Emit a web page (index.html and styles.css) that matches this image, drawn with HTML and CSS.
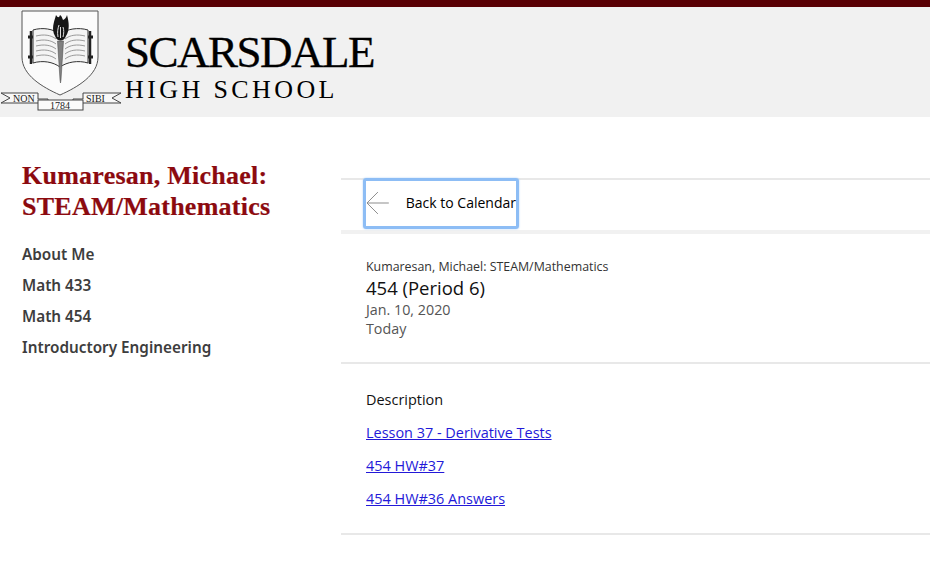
FILE: index.html
```html
<!DOCTYPE html>
<html lang="en">
<head>
    <meta charset="UTF-8">
    <meta name="viewport" content="width=device-width, initial-scale=1.0">
    <title>Scarsdale High School</title>
    <link rel="stylesheet" href="styles.css">
</head>
<body>

<header class="site-header">
    <svg class="crest" width="122" height="106" viewBox="0 0 122 106">
        <!-- shield -->
        <path d="M22 4 H98 V50 C98 68 78 80 60 88 C42 80 22 68 22 50 Z" fill="#fbfbfb" stroke="#555" stroke-width="1"/>
        <!-- book -->
        <path d="M31 24 V57 M90 24 V57" stroke="#222" stroke-width="2.500"/>
        <path d="M28 30 H33 M28 50 H33 M88 30 H93 M88 50 H93" stroke="#222" stroke-width="3"/>
        <path d="M33 23 C43 20 53 22 60 27 C67 22 78 20 88 23 V56 C78 53 67 55 60 60 C53 55 43 53 33 56 Z" fill="#f4f4f4" stroke="#333" stroke-width="1"/>
        <path d="M36 29 C44 27 51 28 56 32 M36 34 C44 32 51 33 56 37 M36 39 C44 37 51 38 56 42 M36 44 C44 42 51 43 56 47 M36 49 C44 47 51 48 56 52 M65 32 C70 28 77 27 85 29 M65 37 C70 33 77 32 85 34 M65 42 C70 38 77 37 85 39 M65 47 C70 43 77 42 85 44 M65 52 C70 48 77 47 85 49" fill="none" stroke="#999" stroke-width="1"/>
        <!-- torch -->
        <path d="M57.500 34 H63.500 L61 73 L60.500 76 L60 73 Z" fill="#808080" stroke="#444" stroke-width="0.500"/>
        <path d="M55 29 C51 22 54 15 56 8 C58 11 59 11 60 8 C62 9 62 11 63 13 C65 12 66 11 67 8 C69 15 70 23 66 29 C64 35 57 35 55 29 Z" fill="#161616"/>
        <path d="M58 30 C57 25 58 21 59 18 M60.500 31 V20 M63 30 C64 26 64 23 63 20" fill="none" stroke="#ddd" stroke-width="1"/>
        <!-- banner -->
        <path d="M1 86 H38 V92 H48 V96 H38 H1 L10 91 Z M121 86 H83 V92 H73 V96 H83 H121 L112 91 Z" fill="#f8f8f8" stroke="#444" stroke-width="1"/>
        <rect x="38" y="93" width="45" height="10" fill="#fbfbfb" stroke="#444" stroke-width="1"/>
        <text class="crest-text" x="13" y="95">NON</text>
        <text class="crest-text" x="86" y="95">SIBI</text>
        <text class="crest-text" x="50" y="102">1784</text>
    </svg>
    <div class="school-name">
        <div class="school-top">SCARSDALE</div>
        <div class="school-bottom">HIGH SCHOOL</div>
    </div>
</header>

<div class="page">
    <aside class="sidebar">
        <h2 class="dept-title">Kumaresan, Michael: STEAM/Mathematics</h2>
        <nav class="side-nav">
            <a href="#">About Me</a>
            <a href="#">Math 433</a>
            <a href="#">Math 454</a>
            <a href="#">Introductory Engineering</a>
        </nav>
    </aside>

    <main class="content">
        <div class="back-row">
            <a class="back-link" href="#">
                <svg width="26" height="24" viewBox="0 0 26 24">
                    <path d="M24 12 H2 M13 1 L2 12 L13 23" fill="none" stroke="#8c8c8c" stroke-width="1"/>
                </svg>
                <span>Back to Calendar</span>
            </a>
        </div>

        <section class="event-head">
            <div class="event-owner">Kumaresan, Michael: STEAM/Mathematics</div>
            <div class="event-title">454 (Period 6)</div>
            <div class="event-meta">Jan. 10, 2020</div>
            <div class="event-meta">Today</div>
        </section>

        <section class="event-body">
            <div class="event-label">Description</div>
            <a href="#">Lesson 37 - Derivative Tests</a>
            <a href="#">454 HW#37</a>
            <a href="#">454 HW#36 Answers</a>
        </section>
    </main>
</div>

</body>
</html>
```

FILE: styles.css
```css
body {
    margin: 0;
    font-family: "Open Sans", Arial, sans-serif;
    background-color: #fff;
    overflow: hidden;
}
.site-header {
    display: flex;
    height: 110px;
    background-color: #f1f1f1;
    border-top: 7px solid #5a0005;
}
.crest {
    flex: none;
    margin-top: 0;
}
.crest-text {
    font-family: "Liberation Serif", serif;
    font-size: 10px;
    fill: #222;
}
.school-name {
    margin-left: 3px;
    margin-top: 21px;
    font-family: "Liberation Serif", serif;
    color: #000;
}
.school-top {
    font-size: 45px;
    line-height: 48px;
    letter-spacing: -1.500px;
    -webkit-text-stroke: 0.300px #000;
}
.school-bottom {
    font-size: 26px;
    line-height: 28px;
    letter-spacing: 3.400px;
}
.page {
    display: flex;
}
.sidebar {
    flex: none;
    width: 319px;
    padding: 43px 0 0 22px;
}
.dept-title {
    margin: 0;
    width: 270px;
    font-family: "Liberation Serif", serif;
    font-size: 26px;
    line-height: 31px;
    font-weight: bold;
    letter-spacing: 0.250px;
    color: #8c0a0f;
    -webkit-text-stroke: 0.200px #8c0a0f;
}
.side-nav {
    display: flex;
    flex-direction: column;
    gap: 9px;
    margin-top: 21px;
}
.side-nav a {
    font-family: "Noto Sans", sans-serif;
    font-size: 15.300px;
    line-height: 22px;
    font-weight: 600;
    color: #3d3d3d;
    text-decoration: none;
}
.content {
    flex: 1;
    margin-top: 61px;
    border-top: 2px solid #e8e8e8;
}
.back-row {
    padding-left: 22px;
    height: 52px;
    border-bottom: 4px solid #f1f1f1;
}
.back-link {
    display: flex;
    align-items: center;
    box-sizing: border-box;
    width: 156px;
    height: 51px;
    margin-top: -2px;
    border: 3px solid #8dbdf5;
    border-radius: 3px;
    box-shadow: 0 0 2px #a9cdf8;
    font-size: 14px;
    color: #000;
    text-decoration: none;
    white-space: nowrap;
}
.back-link svg {
    margin-right: 15px;
    margin-left: -1px;
    margin-top: -2px;
}
.back-link span {
    margin-top: -2px;
}
.event-head {
    padding: 25px 0 24px 25px;
    border-bottom: 2px solid #e8e8e8;
}
.event-owner {
    font-size: 12.400px;
    line-height: 16px;
    color: #333;
}
.event-title {
    font-size: 18.500px;
    line-height: 25px;
    color: #111;
}
.event-meta {
    font-size: 14.300px;
    line-height: 19px;
    color: #555;
}
.event-body {
    display: flex;
    flex-direction: column;
    align-items: flex-start;
    gap: 14px;
    padding: 26px 0 25px 25px;
    border-bottom: 2px solid #e8e8e8;
    font-size: 14.450px;
    line-height: 19px;
}
.event-label {
    color: #111;
}
.event-body a {
    color: #2319d8;
}
```
